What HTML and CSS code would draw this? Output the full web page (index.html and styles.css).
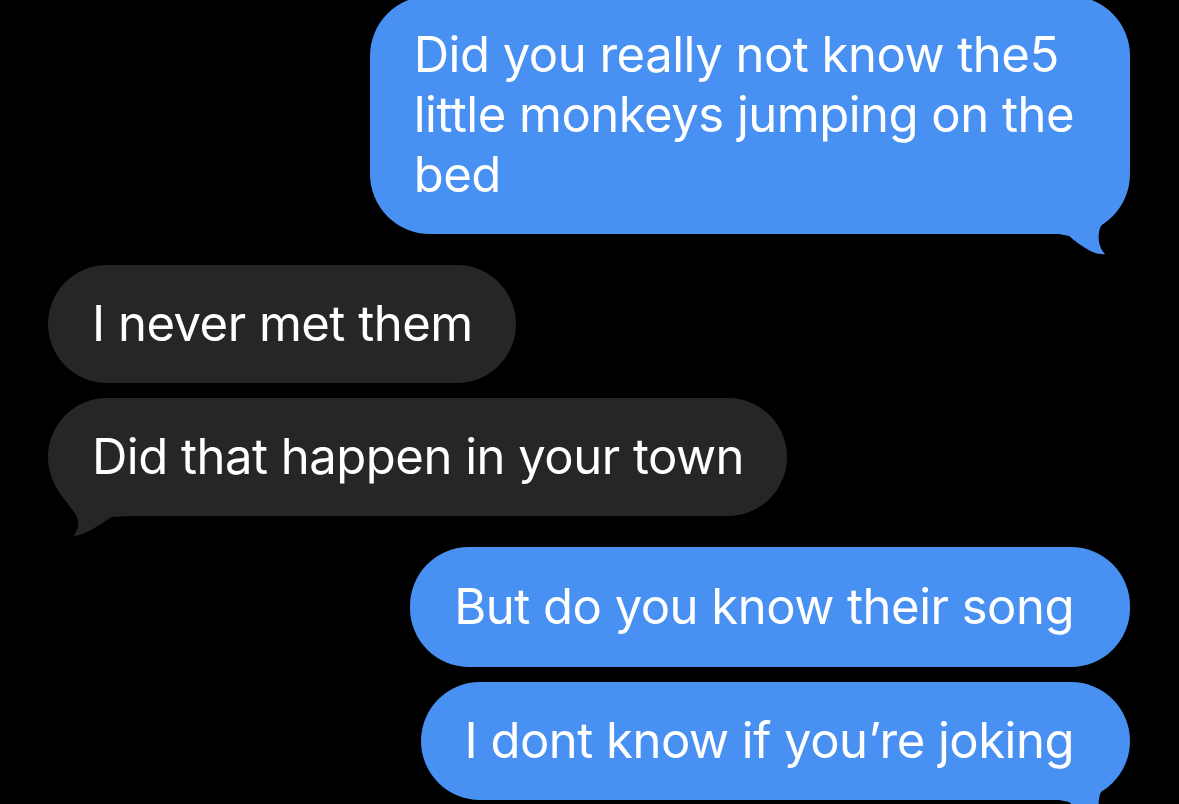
FILE: index.html
```html
<!DOCTYPE html>
<html lang="en">
<head>
<meta charset="utf-8">
<title>Messages</title>
<link rel="stylesheet" href="styles.css">
</head>
<body>
<main class="thread">
  <div class="bubble sent first tailed">
    Did you really not know the5<br>little monkeys jumping on the<br>bed
    <svg class="tail tail-right" width="80" height="80" viewBox="0 0 80 80"><path d="M0 0 H68 C68 22 48 34 41 48 C38 58 40 68 46 74 C36 76 22 66 10 56 L0 54 Z"/></svg>
  </div>
  <div class="bubble received">I never met them</div>
  <div class="bubble received tailed gap-small">
    Did that happen in your town
    <svg class="tail tail-left" width="80" height="70" viewBox="0 0 80 70"><path d="M0 0 C2 20 20 35 27 48 C30 56 27 63 23 67 C35 67 50 55 62 48 L80 47 L80 0 Z"/></svg>
  </div>
  <div class="bubble sent fourth">But do you know their song</div>
  <div class="bubble sent tailed gap-small">
    I dont know if you’re joking
    <svg class="tail tail-right" width="80" height="80" viewBox="0 0 80 80"><path d="M0 0 H68 C68 22 48 34 41 48 C38 58 40 68 46 74 C36 76 22 66 10 56 L0 54 Z"/></svg>
  </div>
</main>
</body>
</html>
```
FILE: styles.css
```css
html, body {
  margin: 0;
  padding: 0;
  background: #000;
  height: 100%;
  overflow: hidden;
}

.thread {
  display: flex;
  flex-direction: column;
  align-items: flex-start;
  padding: 0 49px 0 48px;
  gap: 31px;
  font-family: "Inter", "Noto Sans", sans-serif;
  font-size: 49px;
  line-height: 60px;
  color: #fff;
  letter-spacing: -0.5px;
}

.bubble {
  position: relative;
  isolation: isolate;
  padding: 29px 43px 29px 44px;
  border-radius: 59px;
  white-space: nowrap;
}

.sent {
  align-self: flex-end;
  background: #4891f2;
  padding-right: 56px;
  fill: #4891f2;
}

.received {
  background: #262629;
  fill: #262629;
}

.first {
  margin-top: -4px;
  padding-left: 44px;
  border-radius: 60px;
}

.fourth {
  padding-top: 30px;
  padding-bottom: 30px;
}

.gap-small {
  margin-top: -16px;
}

.tail {
  position: absolute;
  display: block;
  z-index: -1;
}

.tail-right {
  right: -9px;
  bottom: -26px;
}

.tail-left {
  left: 2px;
  bottom: -23px;
}
```
